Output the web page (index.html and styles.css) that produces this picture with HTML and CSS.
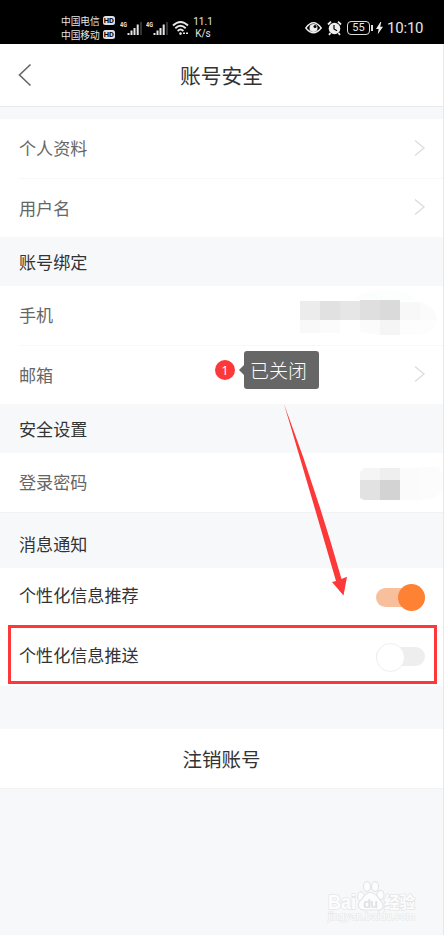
FILE: index.html
```html
<!DOCTYPE html>
<html lang="zh-CN">
<head>
<meta charset="utf-8">
<title>账号安全</title>
<link rel="stylesheet" href="styles.css">
</head>
<body>
<div class="phone">
  <div class="status">
    <div class="carriers">
      <div class="carrier">中国电信<span class="hd">HD</span></div>
      <div class="carrier">中国移动<span class="hd">HD</span></div>
    </div>
    <svg class="signal" width="23" height="18" viewBox="0 0 23 18"><text x="0" y="8" textLength="7" lengthAdjust="spacingAndGlyphs">4G</text><path d="M8.500 16v-2M11.500 16v-4.500M14.500 16V9M17.700 16V5.500" stroke="#e5e5e5" stroke-width="2"/><path d="M21 16V3" stroke="#444" stroke-width="1.500"/></svg>
    <svg class="signal second" width="23" height="18" viewBox="0 0 23 18"><text x="0" y="8" textLength="7" lengthAdjust="spacingAndGlyphs">4G</text><path d="M8.500 16v-2M11.500 16v-4.500M14.500 16V9M17.700 16V5.500" stroke="#e5e5e5" stroke-width="2"/><path d="M21 16V3" stroke="#444" stroke-width="1.500"/></svg>
    <svg class="wifi" width="17" height="16" viewBox="0 0 17 16" fill="none" stroke="#e8e8e8" stroke-width="1.900"><path d="M1 5.500q7.500-7 15 0M3.300 8.300q5.200-5 10.400 0M5.600 11q2.900-2.800 5.800 0"/><circle cx="8.500" cy="13.600" r="1.300" fill="#e8e8e8" stroke="none"/><path d="M11 13.300h5" stroke-width="1.500" stroke-dasharray="2 1"/></svg>
    <div class="speed">11.1<br>K/s</div>
    <svg class="eye" width="17" height="12" viewBox="0 0 17 12"><path d="M.8 6Q8.500-4.500 16.200 6 8.500 15.500.8 6Z" fill="none" stroke="#eee" stroke-width="1.400"/><circle cx="8.500" cy="6" r="4" fill="#eee"/><circle cx="10" cy="4.600" r="1.500" fill="#000"/></svg>
    <svg class="alarm" width="15" height="16" viewBox="0 0 15 16"><circle cx="7.500" cy="8.500" r="5.800" fill="#eee"/><path d="M1 4.500 4 1.700M14 4.500 11 1.700M3.500 13 2 14.800M11.500 13 13 14.800" stroke="#eee" stroke-width="1.800"/><path d="M7 5v4l3 1.700" fill="none" stroke="#000" stroke-width="1.200"/></svg>
    <div class="battery">55</div>
    <i class="nub"></i>
    <svg class="bolt" width="7" height="14" viewBox="0 0 8 14"><path d="M5 0 0 8h3L2 14 8 5.500H4.800L6 0Z" fill="#eee"/></svg>
    <div class="time">10:10</div>
  </div>

  <header class="header">
    <svg class="back" width="14" height="24" viewBox="0 0 14 24"><path d="M12.500 1.500 1.500 12 12.500 22.500" fill="none" stroke="#666" stroke-width="1.600"/></svg>
    <h1>账号安全</h1>
  </header>

  <div class="group">
    <div class="row"><span>个人资料</span><svg class="chevron" width="11" height="18" viewBox="0 0 11 18"><path d="M1 1.500 10 9 1 16.500"/></svg></div>
    <div class="row"><span>用户名</span><svg class="chevron" width="11" height="18" viewBox="0 0 11 18"><path d="M1 1.500 10 9 1 16.500"/></svg></div>
  </div>
  <h2>账号绑定</h2>
  <div class="group">
    <div class="row"><span>手机</span>
      <svg class="phone-mask" width="140" height="46" viewBox="0 0 140 46"><path d="M52 10Q60 0 90 0 110 1 115 10Z" fill="#fcfdfd"/><path d="M0 11h20v19H0z" fill="#ececec"/><path d="M20 11h20v19H20z" fill="#e1e1e1"/><path d="M40 11h20v19H40z" fill="#e6e6e6"/><path d="M60 10h20v20H60z" fill="#dfdfdf"/><path d="M80 10h20v20H80z" fill="#dadada"/><path d="M100 12h20v18h-20z" fill="#f8f8f8"/><path d="M120 12q16 4 17 18h-17z" fill="#fbfbfb"/><path d="M0 30h20v13H0z" fill="#f9f9f9"/><path d="M20 30h20v13H20zM60 30h20v15L60 42z" fill="#fbfbfb"/><path d="M80 30h20v15H80z" fill="#f5f5f5"/><path d="M100 30h37q-2 13-18 15h-19z" fill="#fdfdfd"/></svg>
    </div>
    <div class="row"><span>邮箱</span><svg class="chevron" width="11" height="18" viewBox="0 0 11 18"><path d="M1 1.500 10 9 1 16.500"/></svg></div>
  </div>
  <h2>安全设置</h2>
  <div class="group">
    <div class="row"><span>登录密码</span>
      <svg class="pass-mask" width="83" height="34" viewBox="0 0 83 34"><path d="M4 1h16v12H0V5z" fill="#f5f5f5"/><path d="M20 1h20v12H20z" fill="#efefef"/><path d="M0 13h20v20H4L0 31z" fill="#e2e2e2"/><path d="M20 13h20v20H20z" fill="#d3d3d3"/><path d="M40 1h20v32H40z" fill="#fbfbfb"/><path d="M60 0h18l5 8v16q-8 9-23 9z" fill="#fcfcfc"/></svg>
    </div>
  </div>
  <h2 class="notice">消息通知</h2>
  <div class="group dark">
    <div class="row"><span>个性化信息推荐</span><i class="toggle on"></i></div>
    <div class="row"><span>个性化信息推送</span><i class="toggle"></i></div>
  </div>
  <div class="logout">注销账号</div>

  <div class="badge">1</div>
  <div class="tooltip">已关闭</div>
  <svg class="arrow" width="70" height="196" viewBox="0 0 70 196"><path d="M4 3Q36 88 61.500 178L67 175.700 63.500 194.500 52 181 56 180Q31 94 4 3Z" fill="#fc3838"/></svg>
  <div class="highlight"></div>
  <svg class="watermark" width="94" height="46" viewBox="0 0 94 46">
    <g fill="#fdfdfe" stroke="#e3e5e7" stroke-width="1.200"><ellipse cx="34" cy="18.500" rx="3.500" ry="4.600"/><ellipse cx="40" cy="8.500" rx="3.500" ry="4.800"/><ellipse cx="48" cy="8.500" rx="3.500" ry="4.800"/><ellipse cx="53.500" cy="17" rx="3.500" ry="4.700"/><path d="M43.500 14.500C38 14.500 37 19 33 23 29 28 33 33 38 32H50C56 33 58 28 54 23 50 19 49 14.500 43.500 14.500Z"/></g>
    <text class="wm-bai" x="1" y="31" textLength="28" lengthAdjust="spacingAndGlyphs">Bai</text><text class="wm-du" x="36" y="30" textLength="15">du</text><text class="wm-cn" x="57" y="30" textLength="31">经验</text><text class="wm-url" x="1" y="42" textLength="87" lengthAdjust="spacingAndGlyphs">jingyan.baidu.com</text>
  </svg>
</div>
</body>
</html>
```

FILE: styles.css
```css
* { box-sizing: border-box; }
body { margin: 0; background: #f7f8fa; font-family: "Noto Sans CJK SC", sans-serif; overflow: hidden; }
.phone { position: relative; width: 444px; height: 935px; border-right: 1px solid #e8e8e8; background: #f7f8fa; }
.status { display: flex; align-items: center; height: 44px; margin-right: -1px; padding: 11px 0 0 61px; background: #000; color: #e6e6e6; }
.carriers { width: 56px; }
.carrier { display: flex; align-items: center; gap: 3px; height: 14px; font-size: 9.7px; line-height: 14px; white-space: nowrap; }
.hd { width: 12px; height: 9px; border-radius: 2.500px; background: #e0e0e0; color: #000; font: bold 7.500px/9px Roboto, sans-serif; text-align: center; }
.signal { margin-left: 3px; flex: none; }
.signal text { fill: #e6e6e6; font: bold 8px Roboto, sans-serif; }
.second { margin-left: 3px; }
.wifi { margin-left: 3px; }
.speed { width: 24px; margin-left: 2px; font: 10px/11.5px Roboto, sans-serif; text-align: center; letter-spacing: 0; }
.eye { margin-left: 90px; }
.alarm { margin-left: 5px; }
.battery { width: 23px; height: 14px; margin-left: 5px; border: 1.500px solid #ddd; border-radius: 4px; font: 11px/12px Roboto, sans-serif; text-align: center; }
.nub { width: 2px; height: 6px; margin-left: 1px; background: #ddd; }
.bolt { margin-left: 3px; }
.time { margin-left: 4px; font: 15px/18px Roboto, sans-serif; letter-spacing: -.2px; }
.header { display: grid; grid-template-columns: 60px 1fr 60px; align-items: center; height: 63px; margin-bottom: 12px; border-bottom: 1px solid #e7e8e9; background: #fff; }
.back { margin-left: 18px; }
h1 { margin: 0; color: #333; font-size: 20.8px; font-weight: 400; line-height: 30px; text-align: center; }
.group { background: #fff; }
.row { display: flex; align-items: center; justify-content: space-between; height: 59px; margin-left: 19px; padding: 0 18px 1px 0; color: #666; font-size: 17.1px; line-height: 26px; }
.row + .row { border-top: 1px solid #f7f8f8; }
.dark .row { color: #333; }
.dark .row span { margin-top: -4px; }
.chevron { fill: none; stroke: #dcdcdc; stroke-width: 1.300; margin-top: -1px; }
h2 { height: 49px; margin: 0; padding: 0 0 0 19px; color: #333; font-size: 17.1px; font-weight: 400; line-height: 49px; }
h2.notice { height: 56px; padding-top: 6px; border-top: 1px solid #f1f2f3; }
.phone-mask { margin: -5px -15px 0 0; }
.pass-mask { margin: 3px -18px 0 0; }
.toggle { position: relative; width: 49px; height: 19px; border-radius: 10px; background: #eee; }
.toggle::after { content: ""; position: absolute; top: -4px; left: 0; width: 27px; height: 27px; border: 1px solid #eee; border-radius: 50%; background: #fff; }
.toggle.on { background: #f7bf9c; }
.toggle.on::after { right: 0; left: auto; border: 0; background: #ff8133; }
.logout { height: 60px; margin-top: 43px; border-bottom: 1px solid #f1f2f3; background: #fff; color: #333; font-size: 19.500px; line-height: 59px; text-align: center; }
.badge { position: absolute; top: 360px; left: 215px; width: 20px; height: 20px; border-radius: 50%; background: #fc3838; color: #fff; font: 13px/20px "Open Sans", sans-serif; text-align: center; }
.tooltip { position: absolute; top: 351px; left: 244px; width: 75px; height: 38px; padding-left: 6px; border-radius: 3px; background: #666; color: #fff; font-size: 19px; font-weight: 300; line-height: 37px; }
.tooltip::before { content: ""; position: absolute; top: 14px; left: -5px; border: solid transparent; border-width: 5px 5px 5px 0; border-right-color: #666; }
.arrow { position: absolute; top: 401px; left: 280px; }
.highlight { position: absolute; top: 625px; left: 8px; width: 429px; height: 59px; border: 3px solid #fc3838; }
.watermark { position: absolute; top: 878px; left: 327px; overflow: visible; }
.watermark text { fill: #fdfdfe; stroke: #e4e6e8; stroke-width: 1.500px; paint-order: stroke; font-weight: bold; font-family: "Liberation Sans", "Noto Sans CJK SC", sans-serif; }
.watermark .wm-bai { font-size: 20px; }
.watermark .wm-du { fill: #dfe2e5; stroke: none; font-size: 13px; }
.watermark .wm-cn { font-size: 15.500px; }
.watermark .wm-url { font-size: 10px; font-weight: 400; stroke-width: 1px; }
```
